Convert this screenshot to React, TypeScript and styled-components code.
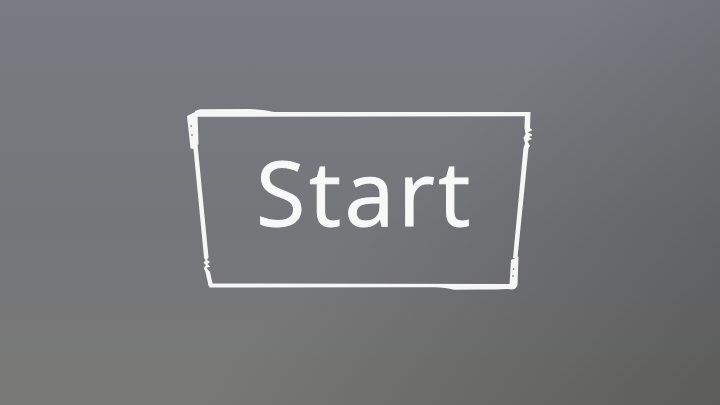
import styled, { createGlobalStyle } from "styled-components";

const GlobalStyle = createGlobalStyle`
  html,
  body {
    margin: 0;
    padding: 0;
    height: 100%;
  }

  body {
    font-family: "Open Sans", "Noto Sans", sans-serif;
  }
`;

const Screen = styled.div`
  width: 100vw;
  height: 100vh;
  display: flex;
  align-items: center;
  justify-content: center;
  overflow: hidden;
  background:
    linear-gradient(135deg, rgba(0, 0, 0, 0) 52%, rgba(0, 0, 0, 0.24) 100%),
    linear-gradient(to bottom, #787b82 0%, #75767a 55%, #797977 100%);
`;

const StartButton = styled.button`
  position: relative;
  width: 348px;
  height: 184px;
  margin-bottom: 5px;
  margin-right: 4px;
  padding: 0;
  border: none;
  background: transparent;
  display: flex;
  align-items: center;
  justify-content: center;
  cursor: pointer;
`;

const Frame = styled.svg`
  position: absolute;
  inset: 0;
  width: 100%;
  height: 100%;
  pointer-events: none;
`;

const Label = styled.span`
  position: relative;
  margin: 0 0 18px 14px;
  font-family: "Open Sans", "Noto Sans", sans-serif;
  font-size: 90px;
  line-height: 1;
  letter-spacing: 3.5px;
  color: #f8f8f8;
  -webkit-text-stroke: 1px #f8f8f8;
`;

const ink = "#f6f6f6";
const pin = "#8a8b8e";

// hand-drawn plank frame with nailed brackets on two corners
const PlankFrame = () => (
  <Frame viewBox="0 0 348 184">
    {/* top plank */}
    <path
      d="M11 3 L16 1.2 L66 1 Q80 1.5 90 4 L346 4 L346 8.2 L12 8.8 Z"
      fill={ink}
    />
    {/* top-left bracket */}
    <path d="M3 8 L11 4 L13.5 6 L14.5 36 L10 41 L6.5 40.5 Z" fill={ink} />
    <circle cx="7.2" cy="18" r="0.9" fill={pin} />
    <circle cx="8" cy="27" r="0.9" fill={pin} />

    {/* left plank */}
    <path d="M9 36 L13.5 36 L24.5 149 L20 149 Z" fill={ink} />
    <path
      d="M19.5 149 L24.8 149 L23 152 L26 154 L23.5 156 L26.2 158.5 L22.5 160 L26 164 L21.5 164 L19.8 160 L22 157 L19.5 155 L21.5 152 Z"
      fill={ink}
    />
    <path d="M21.5 164 L26 164 L29 177.5 L24.5 177.5 Z" fill={ink} />

    {/* right plank */}
    <path d="M341 4 L346.5 4 L346 20 L340.5 20 Z" fill={ink} />
    <path
      d="M340.5 20 L346 20 L348.5 22 L344 24.5 L349 27 L345 29 L348 31 L343.5 33 L346 38 L344.5 40 L339.5 40 L341 35 L339.5 30 L341.5 26 Z"
      fill={ink}
    />
    <path d="M339.5 40 L344.5 40 L333.5 150 L329 150 Z" fill={ink} />

    {/* bottom-right bracket */}
    <path
      d="M327 152 L334.5 148.5 L333.5 177 Q332.5 181 328 181.5 L323 181 L325.5 177 Z"
      fill={ink}
    />
    <circle cx="329.5" cy="161" r="0.9" fill={pin} />
    <circle cx="329" cy="168" r="0.9" fill={pin} />

    {/* bottom plank */}
    <path
      d="M24 175.5 L326 176 L326 180.5 Q318 181.8 300 181.5 L270 181.8 Q262 179.6 250 179.2 L25.5 179.5 Z"
      fill={ink}
    />
  </Frame>
);

export default function App() {
  return (
    <>
      <GlobalStyle />
      <Screen>
        <StartButton type="button">
          <PlankFrame />
          <Label>Start</Label>
        </StartButton>
      </Screen>
    </>
  );
}
